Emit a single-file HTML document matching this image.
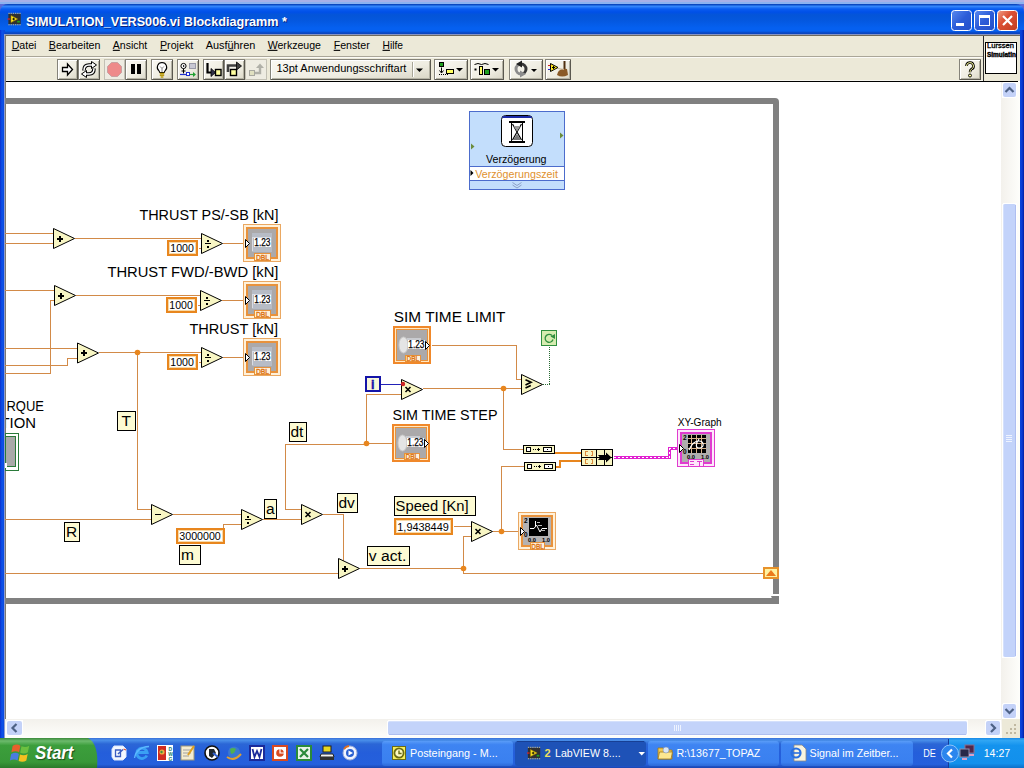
<!DOCTYPE html>
<html>
<head>
<meta charset="utf-8">
<title>SIMULATION_VERS006.vi Blockdiagramm</title>
<style>
html,body{margin:0;padding:0;}
body{width:1024px;height:768px;overflow:hidden;background:#fff;position:relative;font-family:"Liberation Sans",sans-serif;font-size:11px;color:#000;}
.abs{position:absolute;}
#deskTop{left:0;top:0;width:1024px;height:14px;background:linear-gradient(to bottom,#a8b0e8 0,#a8b0e8 2px,#8cb2f0 2px,#8cb2f0 4px,#5c6cd8 4px,#4a5cd4 14px);}
#title{left:0;top:4px;width:1024px;height:30px;border-radius:8px 8px 0 0;
 background:linear-gradient(to bottom,#0a48c0 0,#0a48c0 1px,#3a8cff 2px,#2a7cf8 3px,#0a5cf0 5px,#0050e8 8px,#0455d8 11px,#0457de 16px,#0560f0 24px,#0560f0 27px,#0a45c0 29px,#0a45c0 30px);}
#lb{left:0;top:30px;width:5px;height:708px;background:linear-gradient(to right,#0a2fcf 0,#0c52ea 2px,#0b45d8 5px);}
#lb2{left:4px;top:34px;width:1px;height:704px;background:#8c9cd0;}
#rb{left:1020px;top:30px;width:4px;height:708px;background:linear-gradient(to right,#0b45d8,#0a3cd6 50%,#021fa0);}
#menubar{left:5px;top:34px;width:1015px;height:23px;background:#ece9d8;border-top:1px solid #8694c4;box-sizing:border-box;box-shadow:inset 0 1px 0 #6e6a5c;}
#toolbar{left:5px;top:57px;width:1015px;height:24px;background:#ece9d8;border-top:1px solid #fbfaf6;box-sizing:border-box;}
#mline{left:5px;top:56px;width:978px;height:1px;background:#aaa698;}
#tbl2{left:5px;top:80px;width:978px;height:1px;background:#f6f5ee;}
#iconpane{left:983px;top:36px;width:37px;height:45px;background:#ece9d8;border-left:1px solid #303030;box-sizing:border-box;}
#tbline{left:5px;top:81px;width:1013px;height:1px;background:#000;}
#canvasL{left:5px;top:35px;width:1px;height:703px;background:#7c7870;}
svg{position:absolute;left:0;top:0;}
svg text{font-family:"Liberation Sans",sans-serif;white-space:pre;}
</style>
</head>
<body>
<div id="deskTop" class="abs"></div>
<div id="title" class="abs"></div>
<div id="lb" class="abs"></div>
<div id="rb" class="abs"></div>
<div id="lb2" class="abs"></div>
<div id="menubar" class="abs"></div>
<div id="toolbar" class="abs"></div>
<div id="mline" class="abs"></div>
<div id="iconpane" class="abs"></div>
<div id="tbl2" class="abs"></div>
<div id="tbline" class="abs"></div>
<div id="canvasL" class="abs"></div>
<svg width="1024" height="768" viewBox="0 0 1024 768" shape-rendering="crispEdges">
<g id="scroll">
<defs><linearGradient id="gvt" x1="0" y1="0" x2="1" y2="0"><stop offset="0" stop-color="#f3f1ec"/><stop offset="1" stop-color="#fefefb"/></linearGradient><linearGradient id="ght" x1="0" y1="0" x2="0" y2="1"><stop offset="0" stop-color="#f3f1ec"/><stop offset="1" stop-color="#fefefb"/></linearGradient></defs>
<rect x="1001" y="82" width="19" height="637" fill="url(#gvt)"/>
<rect x="5" y="719" width="997" height="19" fill="url(#ght)"/>
<rect x="1002" y="719" width="18" height="19" fill="#ece9d8"/>
<rect x="1002" y="82" width="15" height="16" fill="#fff" rx="2"/><rect x="1003" y="83" width="13" height="14" rx="2" fill="#c4d2f8" shape-rendering="auto"/><path d="M1005.5 92.0L1009.5 88.0L1013.5 92.0" stroke="#4d6185" stroke-width="2.2" fill="none" shape-rendering="auto"/>
<rect x="1002" y="703" width="15" height="16" fill="#fff" rx="2"/><rect x="1003" y="704" width="13" height="14" rx="2" fill="#c4d2f8" shape-rendering="auto"/><path d="M1005.5 709.0L1009.5 713.0L1013.5 709.0" stroke="#4d6185" stroke-width="2.2" fill="none" shape-rendering="auto"/>
<rect x="1002" y="203" width="15" height="455" fill="#fff" rx="2"/>
<rect x="1003" y="204" width="13" height="453" rx="2" fill="#c3d3fa" shape-rendering="auto"/>
<path d="M1003.5 205V656" stroke="#d4e0fc" stroke-width="1"/><path d="M1015.500 205V656" stroke="#aebef0" stroke-width="1"/>
<path d="M1006 435.500h6M1006 437.500h6M1006 439.500h6M1006 441.500h6" stroke="#eef3ff" stroke-width="1"/>
<rect x="6" y="720" width="17" height="16" fill="#fff" rx="2"/><rect x="7" y="721" width="15" height="14" rx="2" fill="#c4d2f8" shape-rendering="auto"/><path d="M16.5 724.0L12.5 728.0L16.5 732.0" stroke="#4d6185" stroke-width="2.2" fill="none" shape-rendering="auto"/>
<rect x="985" y="720" width="16" height="16" fill="#fff" rx="2"/><rect x="986" y="721" width="14" height="14" rx="2" fill="#c4d2f8" shape-rendering="auto"/><path d="M991.0 724.0L995.0 728.0L991.0 732.0" stroke="#4d6185" stroke-width="2.2" fill="none" shape-rendering="auto"/>
<rect x="387" y="720" width="581" height="16" fill="#fff" rx="2"/>
<rect x="388" y="721" width="579" height="14" rx="2" fill="#c3d3fa" shape-rendering="auto"/>
<path d="M389 721.500H966" stroke="#d4e0fc" stroke-width="1"/><path d="M389 734.500H966" stroke="#aebef0" stroke-width="1"/>
<path d="M674.500 725v6M676.500 725v6M678.500 725v6M680.500 725v6" stroke="#eef3ff" stroke-width="1"/>
<rect x="1014" y="724" width="2" height="2" fill="#c0b8a0"/><rect x="1010" y="728" width="2" height="2" fill="#c0b8a0"/><rect x="1014" y="728" width="2" height="2" fill="#c0b8a0"/><rect x="1006" y="732" width="2" height="2" fill="#c0b8a0"/><rect x="1010" y="732" width="2" height="2" fill="#c0b8a0"/><rect x="1014" y="732" width="2" height="2" fill="#c0b8a0"/>
</g>
<g id="diagram">
<path d="M5 98H775Q779 98 779 102V594H773V104H5Z" fill="#808080" shape-rendering="auto"/>
<rect x="5" y="598" width="768" height="6" fill="#808080"/>
<polygon points="771,596 779,596 779,604 771,604 773,601" fill="#808080" shape-rendering="auto"/>
<polyline points="4.5,233.5 53.5,233.5" fill="none" stroke="#d28a48" stroke-width="1"/>
<polyline points="4.5,243.5 53.5,243.5" fill="none" stroke="#d28a48" stroke-width="1"/>
<polyline points="74.5,238.5 201.5,238.5" fill="none" stroke="#d28a48" stroke-width="1"/>
<polyline points="198.5,248.5 201.5,248.5" fill="none" stroke="#d28a48" stroke-width="1"/>
<polyline points="222.5,243.5 243.5,243.5" fill="none" stroke="#d28a48" stroke-width="1"/>
<polyline points="4.5,290.5 54.5,290.5" fill="none" stroke="#d28a48" stroke-width="1"/>
<polyline points="54.5,300.5 50.5,300.5 50.5,373.5 4.5,373.5" fill="none" stroke="#d28a48" stroke-width="1"/>
<polyline points="75.5,295.5 200.5,295.5" fill="none" stroke="#d28a48" stroke-width="1"/>
<polyline points="197.5,305.5 200.5,305.5" fill="none" stroke="#d28a48" stroke-width="1"/>
<polyline points="221.5,300.5 243.5,300.5" fill="none" stroke="#d28a48" stroke-width="1"/>
<polyline points="4.5,348.5 77.5,348.5" fill="none" stroke="#d28a48" stroke-width="1"/>
<polyline points="77.5,358.5 67.5,358.5 67.5,365.5 4.5,365.5" fill="none" stroke="#d28a48" stroke-width="1"/>
<polyline points="98.5,352.5 201.5,352.5" fill="none" stroke="#d28a48" stroke-width="1"/>
<polyline points="198.5,362.5 201.5,362.5" fill="none" stroke="#d28a48" stroke-width="1"/>
<polyline points="222.5,357.5 243.5,357.5" fill="none" stroke="#d28a48" stroke-width="1"/>
<polyline points="137.5,352.5 137.5,509.5 151.5,509.5" fill="none" stroke="#d28a48" stroke-width="1"/>
<polyline points="4.5,519.5 151.5,519.5" fill="none" stroke="#d28a48" stroke-width="1"/>
<polyline points="172.5,514.5 241.5,514.5" fill="none" stroke="#d28a48" stroke-width="1"/>
<polyline points="241.5,524.5 223.5,524.5 223.5,528.5" fill="none" stroke="#d28a48" stroke-width="1"/>
<polyline points="262.5,519.5 301.5,519.5" fill="none" stroke="#d28a48" stroke-width="1"/>
<polyline points="392.5,443.5 366.5,443.5" fill="none" stroke="#d28a48" stroke-width="1"/>
<polyline points="366.5,444.5 285.5,444.5 285.5,509.5 301.5,509.5" fill="none" stroke="#d28a48" stroke-width="1"/>
<polyline points="322.5,514.5 343.5,514.5 343.5,562.5" fill="none" stroke="#d28a48" stroke-width="1"/>
<polyline points="4.5,573.5 338.5,573.5" fill="none" stroke="#d28a48" stroke-width="1"/>
<polyline points="359.5,568.5 463.5,568.5" fill="none" stroke="#d28a48" stroke-width="1"/>
<polyline points="471.5,536.5 463.5,536.5 463.5,573.5 763.5,573.5" fill="none" stroke="#d28a48" stroke-width="1"/>
<polyline points="453.5,526.5 471.5,526.5" fill="none" stroke="#d28a48" stroke-width="1"/>
<polyline points="492.5,531.5 518.5,531.5" fill="none" stroke="#d28a48" stroke-width="1"/>
<polyline points="501.5,531.5 501.5,466.5 524.5,466.5" fill="none" stroke="#d28a48" stroke-width="1"/>
<polyline points="366.5,443.5 366.5,394.5 401.5,394.5" fill="none" stroke="#d28a48" stroke-width="1"/>
<polyline points="422.5,388.5 521.5,388.5" fill="none" stroke="#d28a48" stroke-width="1"/>
<polyline points="503.5,388.5 503.5,449.5 523.5,449.5" fill="none" stroke="#d28a48" stroke-width="1"/>
<polyline points="431.5,345.5 516.5,345.5 516.5,379.5 521.5,379.5" fill="none" stroke="#d28a48" stroke-width="1"/>
<polyline points="380.5,384.5 401.5,384.5" fill="none" stroke="#2222b8" stroke-width="1"/>
<polyline points="542.5,384.5 549.5,384.5 549.5,346" fill="none" stroke="#2a6a34" stroke-width="1" stroke-dasharray="1 1"/>
<polyline points="555,453 581,453" fill="none" stroke="#e8861e" stroke-width="2"/>
<polyline points="556,467 560,467 560,461 581,461" fill="none" stroke="#e8861e" stroke-width="2"/>
<polyline points="613.5,457.5 669.5,457.5 669.5,448.5 677.5,448.5" fill="none" stroke="#e020d0" stroke-width="3"/><polyline points="613.5,457.5 669.5,457.5 669.5,448.5 677.5,448.5" fill="none" stroke="#fff" stroke-width="1" stroke-dasharray="2 2"/>
<circle cx="137.5" cy="352.5" r="2.8" fill="#e8861e" shape-rendering="auto"/>
<circle cx="366.5" cy="443.5" r="2.8" fill="#e8861e" shape-rendering="auto"/>
<circle cx="503.5" cy="388.5" r="2.8" fill="#e8861e" shape-rendering="auto"/>
<circle cx="501.5" cy="531.5" r="2.8" fill="#e8861e" shape-rendering="auto"/>
<circle cx="463.5" cy="568.5" r="2.8" fill="#e8861e" shape-rendering="auto"/>
<polygon points="53.5,228.5 74.5,238.5 53.5,248.5" fill="#f8f6c4" stroke="#000" stroke-width="1" shape-rendering="auto"/><path d="M57 238.5H63M60 235.5V241.5" stroke="#000" stroke-width="2" fill="none"/>
<polygon points="201.5,233.5 222.5,243.5 201.5,253.5" fill="#f8f6c4" stroke="#000" stroke-width="1" shape-rendering="auto"/><path d="M205 243.5H211" stroke="#000" stroke-width="1.2" fill="none"/><rect x="207" y="239.5" width="2" height="2" fill="#000"/><rect x="207" y="245.5" width="2" height="2" fill="#000"/>
<rect x="168" y="241" width="29" height="14" fill="#fff" stroke="#e8861e" stroke-width="2"/><rect x="169.5" y="242.5" width="26" height="11" fill="none" stroke="#f7d9a8" stroke-width="1"/><text x="170.3" y="252" font-size="11.5" fill="#000" textLength="23.5" lengthAdjust="spacingAndGlyphs">1000</text>
<rect x="243.5" y="224.5" width="37" height="37" fill="#fff1da" stroke="#eaa862" stroke-width="1"/><rect x="247" y="228" width="30" height="30" fill="#aba9aa" stroke="#e8923c" stroke-width="2"/><rect x="252" y="233" width="20" height="19" fill="#b7bcc6"/><path d="M252.5 251V237.5H271" stroke="#d8dce4" stroke-width="1" fill="none"/><rect x="254" y="238" width="17" height="9" fill="#fff"/><text x="254.3" y="246" font-size="10" fill="#000" textLength="16.2" lengthAdjust="spacingAndGlyphs" stroke="#000" stroke-width="0.25">1.23</text><polygon points="245.5,239.5 249.5,243.5 245.5,247.5" fill="#fff" stroke="#000" stroke-width="1" shape-rendering="auto"/><rect x="254.5" y="253.5" width="16" height="7" fill="#fff1da" stroke="#e8923c" stroke-width="1"/><text x="256" y="259.8" font-size="7" fill="#dc7414" textLength="13" lengthAdjust="spacingAndGlyphs" stroke="#dc7414" stroke-width="0.35">DBL</text>
<polygon points="54.5,285.5 75.5,295.5 54.5,305.5" fill="#f8f6c4" stroke="#000" stroke-width="1" shape-rendering="auto"/><path d="M58 295.5H64M61 292.5V298.5" stroke="#000" stroke-width="2" fill="none"/>
<polygon points="200.5,290.5 221.5,300.5 200.5,310.5" fill="#f8f6c4" stroke="#000" stroke-width="1" shape-rendering="auto"/><path d="M204 300.5H210" stroke="#000" stroke-width="1.2" fill="none"/><rect x="206" y="296.5" width="2" height="2" fill="#000"/><rect x="206" y="302.5" width="2" height="2" fill="#000"/>
<rect x="167" y="298" width="29" height="14" fill="#fff" stroke="#e8861e" stroke-width="2"/><rect x="168.5" y="299.5" width="26" height="11" fill="none" stroke="#f7d9a8" stroke-width="1"/><text x="169.3" y="309" font-size="11.5" fill="#000" textLength="23.5" lengthAdjust="spacingAndGlyphs">1000</text>
<rect x="243.5" y="281.5" width="37" height="37" fill="#fff1da" stroke="#eaa862" stroke-width="1"/><rect x="247" y="285" width="30" height="30" fill="#aba9aa" stroke="#e8923c" stroke-width="2"/><rect x="252" y="290" width="20" height="19" fill="#b7bcc6"/><path d="M252.5 308V294.5H271" stroke="#d8dce4" stroke-width="1" fill="none"/><rect x="254" y="295" width="17" height="9" fill="#fff"/><text x="254.3" y="303" font-size="10" fill="#000" textLength="16.2" lengthAdjust="spacingAndGlyphs" stroke="#000" stroke-width="0.25">1.23</text><polygon points="245.5,296.5 249.5,300.5 245.5,304.5" fill="#fff" stroke="#000" stroke-width="1" shape-rendering="auto"/><rect x="254.5" y="310.5" width="16" height="7" fill="#fff1da" stroke="#e8923c" stroke-width="1"/><text x="256" y="316.8" font-size="7" fill="#dc7414" textLength="13" lengthAdjust="spacingAndGlyphs" stroke="#dc7414" stroke-width="0.35">DBL</text>
<polygon points="77.5,343 98.5,353 77.5,363" fill="#f8f6c4" stroke="#000" stroke-width="1" shape-rendering="auto"/><path d="M81 353H87M84 350V356" stroke="#000" stroke-width="2" fill="none"/>
<polygon points="201.5,347.5 222.5,357.5 201.5,367.5" fill="#f8f6c4" stroke="#000" stroke-width="1" shape-rendering="auto"/><path d="M205 357.5H211" stroke="#000" stroke-width="1.2" fill="none"/><rect x="207" y="353.5" width="2" height="2" fill="#000"/><rect x="207" y="359.5" width="2" height="2" fill="#000"/>
<rect x="168" y="355" width="29" height="14" fill="#fff" stroke="#e8861e" stroke-width="2"/><rect x="169.5" y="356.5" width="26" height="11" fill="none" stroke="#f7d9a8" stroke-width="1"/><text x="170.3" y="366" font-size="11.5" fill="#000" textLength="23.5" lengthAdjust="spacingAndGlyphs">1000</text>
<rect x="243.5" y="338.5" width="37" height="37" fill="#fff1da" stroke="#eaa862" stroke-width="1"/><rect x="247" y="342" width="30" height="30" fill="#aba9aa" stroke="#e8923c" stroke-width="2"/><rect x="252" y="347" width="20" height="19" fill="#b7bcc6"/><path d="M252.5 365V351.5H271" stroke="#d8dce4" stroke-width="1" fill="none"/><rect x="254" y="352" width="17" height="9" fill="#fff"/><text x="254.3" y="360" font-size="10" fill="#000" textLength="16.2" lengthAdjust="spacingAndGlyphs" stroke="#000" stroke-width="0.25">1.23</text><polygon points="245.5,353.5 249.5,357.5 245.5,361.5" fill="#fff" stroke="#000" stroke-width="1" shape-rendering="auto"/><rect x="254.5" y="367.5" width="16" height="7" fill="#fff1da" stroke="#e8923c" stroke-width="1"/><text x="256" y="373.8" font-size="7" fill="#dc7414" textLength="13" lengthAdjust="spacingAndGlyphs" stroke="#dc7414" stroke-width="0.35">DBL</text>
<polygon points="151.5,504.5 172.5,514.5 151.5,524.5" fill="#f8f6c4" stroke="#000" stroke-width="1" shape-rendering="auto"/><path d="M155 514.5H161" stroke="#000" stroke-width="1.2" fill="none"/>
<polygon points="241.5,509.5 262.5,519.5 241.5,529.5" fill="#f8f6c4" stroke="#000" stroke-width="1" shape-rendering="auto"/><path d="M245 519.5H251" stroke="#000" stroke-width="1.2" fill="none"/><rect x="247" y="515.5" width="2" height="2" fill="#000"/><rect x="247" y="521.5" width="2" height="2" fill="#000"/>
<rect x="177" y="529" width="47" height="14" fill="#fff" stroke="#e8861e" stroke-width="2"/><rect x="178.5" y="530.5" width="44" height="11" fill="none" stroke="#f7d9a8" stroke-width="1"/><text x="179.3" y="540" font-size="11.5" fill="#000" textLength="41.5" lengthAdjust="spacingAndGlyphs">3000000</text>
<polygon points="301.5,504.5 322.5,514.5 301.5,524.5" fill="#f8f6c4" stroke="#000" stroke-width="1" shape-rendering="auto"/><path d="M305.5 512L310.5 517M310.5 512L305.5 517" stroke="#000" stroke-width="1.6" fill="none" shape-rendering="auto"/>
<polygon points="338.5,558.5 359.5,568.5 338.5,578.5" fill="#f8f6c4" stroke="#000" stroke-width="1" shape-rendering="auto"/><path d="M342 568.5H348M345 565.5V571.5" stroke="#000" stroke-width="2" fill="none"/>
<polygon points="471.5,521.5 492.5,531.5 471.5,541.5" fill="#f8f6c4" stroke="#000" stroke-width="1" shape-rendering="auto"/><path d="M475.5 529L480.5 534M480.5 529L475.5 534" stroke="#000" stroke-width="1.6" fill="none" shape-rendering="auto"/>
<rect x="395" y="519" width="57" height="15" fill="#fff" stroke="#e8861e" stroke-width="2"/><rect x="396.5" y="520.5" width="54" height="12" fill="none" stroke="#f7d9a8" stroke-width="1"/><text x="397.3" y="531" font-size="11.5" fill="#000" textLength="51.5" lengthAdjust="spacingAndGlyphs">1,9438449</text>
<polygon points="401.5,379.5 422.5,389.5 401.5,399.5" fill="#f8f6c4" stroke="#000" stroke-width="1" shape-rendering="auto"/><path d="M405.5 387L410.5 392M410.5 387L405.5 392" stroke="#000" stroke-width="1.6" fill="none" shape-rendering="auto"/>
<polygon points="521.5,374.5 542.5,384.5 521.5,394.5" fill="#f8f6c4" stroke="#000" stroke-width="1" shape-rendering="auto"/><path d="M525.5 379.8L531 382.3L525.5 385M530.8 385.5L525.5 388" stroke="#000" stroke-width="1.7" fill="none" shape-rendering="auto"/>
<circle cx="403" cy="384" r="2.2" fill="#cc2424" shape-rendering="auto"/>
<rect x="394" y="327" width="36" height="36" fill="#ffe9c4" stroke="#f0882a" stroke-width="2"/><rect x="396.5" y="329.5" width="31" height="31" fill="#aba9aa" stroke="#e8923c" stroke-width="1"/><ellipse cx="403.5" cy="345" rx="4.5" ry="8" fill="#e4e4e4" stroke="#c9c9c9" stroke-width="1" shape-rendering="auto"/><rect x="407" y="338" width="14" height="2" fill="#c9cbd0"/><rect x="408" y="340" width="17" height="9" fill="#fff"/><text x="408.3" y="348" font-size="10" fill="#000" textLength="16.2" lengthAdjust="spacingAndGlyphs" stroke="#000" stroke-width="0.25">1.23</text><polygon points="425.5,341.5 429.5,345.5 425.5,349.5" fill="#fff" stroke="#000" stroke-width="1" shape-rendering="auto"/><rect x="405.5" y="355.5" width="15" height="6" fill="#fff1da" stroke="#e8923c" stroke-width="1"/><text x="406.5" y="361.3" font-size="7" fill="#dc7414" textLength="12.5" lengthAdjust="spacingAndGlyphs" stroke="#dc7414" stroke-width="0.35">DBL</text>
<rect x="393" y="425" width="36" height="36" fill="#ffe9c4" stroke="#f0882a" stroke-width="2"/><rect x="395.5" y="427.5" width="31" height="31" fill="#aba9aa" stroke="#e8923c" stroke-width="1"/><ellipse cx="402.5" cy="443" rx="4.5" ry="8" fill="#e4e4e4" stroke="#c9c9c9" stroke-width="1" shape-rendering="auto"/><rect x="406" y="436" width="14" height="2" fill="#c9cbd0"/><rect x="407" y="438" width="17" height="9" fill="#fff"/><text x="407.3" y="446" font-size="10" fill="#000" textLength="16.2" lengthAdjust="spacingAndGlyphs" stroke="#000" stroke-width="0.25">1.23</text><polygon points="424.5,439.5 428.5,443.5 424.5,447.5" fill="#fff" stroke="#000" stroke-width="1" shape-rendering="auto"/><rect x="404.5" y="453.5" width="15" height="6" fill="#fff1da" stroke="#e8923c" stroke-width="1"/><text x="405.5" y="459.3" font-size="7" fill="#dc7414" textLength="12.5" lengthAdjust="spacingAndGlyphs" stroke="#dc7414" stroke-width="0.35">DBL</text>
<rect x="518.5" y="512.5" width="37" height="37" fill="#fff1da" stroke="#eaa862" stroke-width="1"/><rect x="522" y="516" width="30" height="30" fill="#b4b2b2" stroke="#e8923c" stroke-width="2"/><rect x="529" y="518" width="19" height="18" fill="#000"/><path d="M530 528.5H534L536.5 525L540 532L542 528.5H547M535.5 521V526" stroke="#fff" stroke-width="1" fill="none" shape-rendering="auto"/><path d="M537 522.5H540M538 525.5H542M541 530.5H545" stroke="#bbb" stroke-width="1" fill="none"/><text x="524" y="523" font-size="6.5" fill="#000" font-weight="bold">2</text><text x="524" y="537" font-size="6.5" fill="#000" font-weight="bold">0</text><text x="528" y="542" font-size="6" fill="#000" font-weight="bold" textLength="8" lengthAdjust="spacingAndGlyphs">0.0</text><text x="542" y="542" font-size="6" fill="#000" font-weight="bold" textLength="8" lengthAdjust="spacingAndGlyphs">1.0</text><polygon points="520.5,527.5 524.5,531.5 520.5,535.5" fill="#fff" stroke="#000" stroke-width="1" shape-rendering="auto"/><rect x="530.5" y="542.5" width="14" height="7" fill="#fff1da" stroke="#e8923c" stroke-width="1"/><text x="531.3" y="548.8" font-size="7" fill="#dc7414" textLength="12.5" lengthAdjust="spacingAndGlyphs" stroke="#dc7414" stroke-width="0.35">DBL</text>
<rect x="677.5" y="429.5" width="37" height="37" fill="#fde8fa" stroke="#e03ccf" stroke-width="1"/><rect x="681" y="433" width="30" height="30" fill="#b0aeae" stroke="#e03ccf" stroke-width="2"/><rect x="688" y="435" width="18" height="18" fill="#000"/><path d="M691.5 435V453M688 438.5H706M696.5 435V453M688 443.5H706M701.5 435V453M688 448.5H706" stroke="#d8b48c" stroke-width="1" fill="none"/><path d="M689 450C692 443 695 441 699 441C704 441 705 448 699 448C695 448 696 443 699 439" stroke="#fff" stroke-width="1.2" fill="none" shape-rendering="auto"/><text x="683" y="440" font-size="6.5" fill="#000" font-weight="bold">2</text><text x="683" y="454" font-size="6.5" fill="#000" font-weight="bold">0</text><text x="687" y="459" font-size="6" fill="#000" font-weight="bold" textLength="8" lengthAdjust="spacingAndGlyphs">0.0</text><text x="701" y="459" font-size="6" fill="#000" font-weight="bold" textLength="8" lengthAdjust="spacingAndGlyphs">1.0</text><polygon points="679.5,444.5 683.5,448.5 679.5,452.5" fill="#fff" stroke="#000" stroke-width="1" shape-rendering="auto"/><rect x="688.5" y="459.5" width="15" height="7" fill="#fde8fa" stroke="#e03ccf" stroke-width="1"/><path d="M690 461.5H694M690 464.5H694M697 461.5H702M699.5 461V466" stroke="#e03ccf" stroke-width="1.6" fill="none"/>
<rect x="523.5" y="445.5" width="31" height="8" fill="#f8f6c4" stroke="#000" stroke-width="1"/><rect x="526.5" y="447.5" width="4" height="4" fill="#fff" stroke="#000" stroke-width="1"/><rect x="533" y="449" width="1" height="1" fill="#000"/><rect x="535" y="449" width="1" height="1" fill="#000"/><path d="M537 449.5H540M538.5 448V451" stroke="#000" stroke-width="1" fill="none"/><rect x="543.5" y="447.5" width="8" height="4" fill="#fff" stroke="#000" stroke-width="1"/><rect x="547" y="449" width="1" height="1" fill="#000"/>
<rect x="524.5" y="462.5" width="31" height="8" fill="#f8f6c4" stroke="#000" stroke-width="1"/><rect x="527.5" y="464.5" width="4" height="4" fill="#fff" stroke="#000" stroke-width="1"/><rect x="534" y="466" width="1" height="1" fill="#000"/><rect x="536" y="466" width="1" height="1" fill="#000"/><path d="M538 466.5H541M539.5 465V468" stroke="#000" stroke-width="1" fill="none"/><rect x="544.5" y="464.5" width="8" height="4" fill="#fff" stroke="#000" stroke-width="1"/><rect x="548" y="466" width="1" height="1" fill="#000"/>
<rect x="581.5" y="449.5" width="31" height="16" fill="#f8f6c4" stroke="#000" stroke-width="1"/><path d="M596.5 449V466M604.5 449V466M581 457.5H613" stroke="#000" stroke-width="1" fill="none"/><path d="M587.5 451.5H585.5V455.5H587.5M590.5 451.5H592.5V455.5H590.5" stroke="#dc8a3c" stroke-width="1" fill="none"/><path d="M587.5 459.5H585.5V463.5H587.5M590.5 459.5H592.5V463.5H590.5" stroke="#dc8a3c" stroke-width="1" fill="none"/><path d="M598 455H606V452.5L611.5 457.5L606 462.5V460H598L600 457.5Z" fill="#000" shape-rendering="auto"/>
<rect x="366" y="377" width="14" height="14" fill="#f7f7da" stroke="#1414a8" stroke-width="2"/>
<text x="371" y="388.6" font-size="12.5" fill="#1414a8" font-weight="bold" stroke="#1414a8" stroke-width="0.4">i</text>
<rect x="541.5" y="330.5" width="15" height="15" fill="#d6ecb0" stroke="#2f8f3f" stroke-width="1"/>
<path d="M552 335.5A4 4 0 1 0 553 339.5" stroke="#2f8f3f" stroke-width="1.3" fill="none" shape-rendering="auto"/><polygon points="550.5,336.5 555,334 555,339" fill="#2f8f3f" shape-rendering="auto"/>
<rect x="764" y="568" width="14" height="10" fill="#fff2a0" stroke="#e8922a" stroke-width="2"/>
<polygon points="766,576 771,570 776,576" fill="#ec7a1a" shape-rendering="auto"/>
<rect x="5.5" y="433.5" width="13" height="37" fill="#fff" stroke="#2a7a3a" stroke-width="1"/>
<rect x="5.5" y="436.5" width="10" height="30" fill="#a9a9a9" stroke="#2a7a3a" stroke-width="1"/>
<rect x="5" y="463" width="2" height="5" fill="#fff"/>
<text x="139.4" y="220.3" font-size="15.5" fill="#000" textLength="139" lengthAdjust="spacingAndGlyphs">THRUST PS/-SB [kN]</text>
<text x="107.4" y="277.3" font-size="15.5" fill="#000" textLength="171" lengthAdjust="spacingAndGlyphs">THRUST FWD/-BWD [kN]</text>
<text x="189.4" y="334" font-size="15.5" fill="#000" textLength="88.6" lengthAdjust="spacingAndGlyphs">THRUST [kN]</text>
<text x="393.8" y="321.6" font-size="15.5" fill="#000" textLength="111.7" lengthAdjust="spacingAndGlyphs">SIM TIME LIMIT</text>
<text x="392.5" y="419.8" font-size="15.5" fill="#000" textLength="105" lengthAdjust="spacingAndGlyphs">SIM TIME STEP</text>
<text x="6.5" y="410.5" font-size="15.5" fill="#000" textLength="37.5" lengthAdjust="spacingAndGlyphs">RQUE</text>
<clipPath id="cv"><rect x="6" y="82" width="996" height="637"/></clipPath>
<text x="0.5" y="428.3" font-size="15.5" fill="#000" textLength="35.5" lengthAdjust="spacingAndGlyphs" clip-path="url(#cv)">TION</text>
<text x="677.7" y="426" font-size="11" fill="#000" textLength="44" lengthAdjust="spacingAndGlyphs">XY-Graph</text>
<rect x="117.5" y="411.5" width="18" height="19" fill="#fdfbd3" stroke="#000" stroke-width="1"/><text x="121.5" y="426" font-size="15.5" fill="#000">T</text>
<rect x="64.5" y="522.5" width="15" height="19" fill="#fdfbd3" stroke="#000" stroke-width="1"/><text x="66" y="537" font-size="15.5" fill="#000">R</text>
<rect x="179.5" y="545.5" width="21" height="19" fill="#fdfbd3" stroke="#000" stroke-width="1"/><text x="181" y="560" font-size="15.5" fill="#000">m</text>
<rect x="264.5" y="499.5" width="12" height="19" fill="#fdfbd3" stroke="#000" stroke-width="1"/><text x="266" y="514" font-size="15.5" fill="#000">a</text>
<rect x="289.5" y="422.5" width="17" height="19" fill="#fdfbd3" stroke="#000" stroke-width="1"/><text x="290.5" y="437" font-size="15.5" fill="#000">dt</text>
<rect x="337.5" y="493.5" width="20" height="19" fill="#fdfbd3" stroke="#000" stroke-width="1"/><text x="338.5" y="508" font-size="15.5" fill="#000">dv</text>
<rect x="367.5" y="546.5" width="42" height="19" fill="#fdfbd3" stroke="#000" stroke-width="1"/><text x="368.8" y="561" font-size="15.5" fill="#000" textLength="37.5" lengthAdjust="spacingAndGlyphs">v act.</text>
<rect x="394.5" y="496.5" width="81" height="19" fill="#fdfbd3" stroke="#000" stroke-width="1"/><text x="395.6" y="511" font-size="15.5" fill="#000" textLength="73" lengthAdjust="spacingAndGlyphs">Speed [Kn]</text>
<rect x="469.5" y="111.5" width="95" height="78" fill="#c3defc" stroke="#4c6ccc" stroke-width="1"/>
<rect x="470" y="167" width="94" height="13" fill="#fff"/>
<path d="M469 166.5H565M469 180.5H565" stroke="#4c6ccc" stroke-width="1" fill="none"/>
<rect x="501.5" y="115.5" width="31" height="31" rx="4" fill="#fff" stroke="#000" stroke-width="1" shape-rendering="auto"/>
<path d="M503.5 116H530.5Q532 116.5 532 118H502Q502 116.5 503.5 116Z" fill="#1a2aa8" shape-rendering="auto"/>
<path d="M509 121H525V123H509ZM509 141H525V143H509Z" fill="#000"/>
<path d="M511.5 123V141M522.5 123V141" stroke="#000" stroke-width="1.6" fill="none"/>
<path d="M512.5 124L521.5 140M521.5 124L512.5 140" stroke="#000" stroke-width="1.2" fill="none" shape-rendering="auto"/>
<polygon points="513.5,126 520.5,126 517,131.5" fill="#999" shape-rendering="auto"/><polygon points="513,140 521,140 517,134" fill="#777" shape-rendering="auto"/>
<polygon points="471,143.5 474.5,146.5 471,149.5" fill="#6c8c3c" shape-rendering="auto"/>
<polygon points="560,132.5 563.5,135.5 560,138.5" fill="#6c8c3c" shape-rendering="auto"/>
<text x="486" y="162.5" font-size="11" fill="#000" textLength="60.5" lengthAdjust="spacingAndGlyphs">Verzögerung</text>
<polygon points="470.5,170 473.5,173 470.5,176" fill="#000" shape-rendering="auto"/>
<text x="475.2" y="177.6" font-size="11" fill="#e0912e" textLength="82.7" lengthAdjust="spacingAndGlyphs">Verzögerungszeit</text>
<path d="M512.5 182.5L517 185.5L521.5 182.5M512.5 185L517 188L521.5 185" stroke="#8ca0c8" stroke-width="1" fill="none" shape-rendering="auto"/>
</g>
<g id="tb">
<defs><linearGradient id="gbtn" x1="0" y1="0" x2="1" y2="1"><stop offset="0" stop-color="#fbfaf5"/><stop offset="0.6" stop-color="#efede2"/><stop offset="1" stop-color="#d8d5c4"/></linearGradient></defs>
<rect x="57" y="59" width="21" height="21" fill="url(#gbtn)"/><path d="M57.5 79.5V59.5H77.5" stroke="#85837a" stroke-width="1" fill="none"/><path d="M58.5 78.5V60.5H76.5" stroke="#ffffff" stroke-width="1" fill="none"/><path d="M77.5 59.5V79.5H57.5" stroke="#5a584f" stroke-width="1" fill="none"/><path d="M76.5 61V78.5H59" stroke="#b4b2a4" stroke-width="1" fill="none"/>
<path d="M62.5 67.5H67.5V64L72.5 69.5L67.5 75V71.5H62.5Z" fill="#fff" stroke="#000" stroke-width="1.3" shape-rendering="auto"/>
<rect x="78" y="59" width="22" height="21" fill="url(#gbtn)"/><path d="M78.5 79.5V59.5H99.5" stroke="#85837a" stroke-width="1" fill="none"/><path d="M79.5 78.5V60.5H98.5" stroke="#ffffff" stroke-width="1" fill="none"/><path d="M99.5 59.5V79.5H78.5" stroke="#5a584f" stroke-width="1" fill="none"/><path d="M98.5 61V78.5H80" stroke="#b4b2a4" stroke-width="1" fill="none"/>
<g shape-rendering="auto" fill="none"><path d="M84 70.5Q84 65 89 65H92" stroke="#000" stroke-width="3.6"/><path d="M94 68.500Q94 74 89 74H86" stroke="#000" stroke-width="3.6"/><polygon points="91.5,61.500 96.5,65 91.5,68.500" fill="#fff" stroke="#000" stroke-width="1"/><polygon points="86.5,70.500 81.5,74 86.5,77.500" fill="#fff" stroke="#000" stroke-width="1"/><path d="M84 70.500Q84 65 89 65H92.500" stroke="#fff" stroke-width="1.500"/><path d="M94 68.500Q94 74 89 74H85.500" stroke="#fff" stroke-width="1.500"/></g>
<rect x="104.5" y="59.5" width="20" height="20" fill="#eeece2" stroke="#c2c0b4" stroke-width="1"/>
<polygon points="111.5,62.5 117.5,62.5 121.5,66.5 121.5,72.5 117.5,76.5 111.5,76.5 107.5,72.5 107.5,66.5" fill="#ee8a8a" stroke="#c9a0a0" stroke-width="1" shape-rendering="auto"/>
<rect x="125" y="59" width="22" height="21" fill="url(#gbtn)"/><path d="M125.5 79.5V59.5H146.5" stroke="#85837a" stroke-width="1" fill="none"/><path d="M126.5 78.5V60.5H145.5" stroke="#ffffff" stroke-width="1" fill="none"/><path d="M146.5 59.5V79.5H125.5" stroke="#5a584f" stroke-width="1" fill="none"/><path d="M145.5 61V78.5H127" stroke="#b4b2a4" stroke-width="1" fill="none"/>
<rect x="131" y="64" width="4" height="10" fill="#000"/><rect x="137" y="64" width="4" height="10" fill="#000"/>
<rect x="151" y="59" width="22" height="21" fill="url(#gbtn)"/><path d="M151.5 79.5V59.5H172.5" stroke="#85837a" stroke-width="1" fill="none"/><path d="M152.5 78.5V60.5H171.5" stroke="#ffffff" stroke-width="1" fill="none"/><path d="M172.5 59.5V79.5H151.5" stroke="#5a584f" stroke-width="1" fill="none"/><path d="M171.5 61V78.5H153" stroke="#b4b2a4" stroke-width="1" fill="none"/>
<g shape-rendering="auto"><path d="M162 62.5a4.7 4.7 0 0 1 3 8.3l-.8 1.7h-4.4l-.8-1.7a4.7 4.7 0 0 1 3-8.3z" fill="#fff" stroke="#000" stroke-width="1.1"/><path d="M160.2 66.5l1.8 2l1.8-2M162 68.5v3.5" stroke="#666" stroke-width=".8" fill="none"/><path d="M159.8 73.5h4.4M159.8 75.3h4.4M160.6 77h2.8" stroke="#b89a10" stroke-width="1.4" fill="none"/></g>
<rect x="177" y="59" width="22" height="21" fill="url(#gbtn)"/><path d="M177.5 79.5V59.5H198.5" stroke="#85837a" stroke-width="1" fill="none"/><path d="M178.5 78.5V60.5H197.5" stroke="#ffffff" stroke-width="1" fill="none"/><path d="M198.5 59.5V79.5H177.5" stroke="#5a584f" stroke-width="1" fill="none"/><path d="M197.5 61V78.5H179" stroke="#b4b2a4" stroke-width="1" fill="none"/>
<g shape-rendering="auto"><circle cx="183.5" cy="66" r="2.6" fill="#fff" stroke="#000" stroke-width="1"/><path d="M183 64.8v2.4l1.7-1.2z" fill="#000"/><path d="M183.5 68.6v4.8M181.5 71h4" stroke="#000" stroke-width="1" fill="none"/><rect x="189.5" y="63.5" width="6" height="5" fill="#c8c8d4" stroke="#9a9aa8"/><path d="M180 74.5h7" stroke="#2030d0" stroke-width="1.2"/><rect x="186.5" y="72.5" width="3" height="3" fill="#fff" stroke="#2030d0" stroke-width="1"/><path d="M190 74.5h4" stroke="#20a030" stroke-width="1.2"/><path d="M193 72l3 2.5l-3 2.500z" fill="#20a030"/></g>
<rect x="203" y="59" width="21" height="21" fill="url(#gbtn)"/><path d="M203.5 79.5V59.5H223.5" stroke="#85837a" stroke-width="1" fill="none"/><path d="M204.5 78.5V60.5H222.5" stroke="#ffffff" stroke-width="1" fill="none"/><path d="M223.5 59.5V79.5H203.5" stroke="#5a584f" stroke-width="1" fill="none"/><path d="M222.5 61V78.5H205" stroke="#b4b2a4" stroke-width="1" fill="none"/>
<g shape-rendering="auto"><path d="M207.500 63v9.500h5" stroke="#000" stroke-width="2.2" fill="none"/><path d="M211 68.500l4.500 4l-4.500 4z" fill="#303048" stroke="#000" stroke-width=".8"/><rect x="215.500" y="69.500" width="5.500" height="6" fill="#ffffa0" stroke="#000" stroke-width="1.400"/></g>
<rect x="224" y="59" width="21" height="21" fill="url(#gbtn)"/><path d="M224.5 79.5V59.5H244.5" stroke="#85837a" stroke-width="1" fill="none"/><path d="M225.5 78.5V60.5H243.5" stroke="#ffffff" stroke-width="1" fill="none"/><path d="M244.5 59.5V79.5H224.5" stroke="#5a584f" stroke-width="1" fill="none"/><path d="M243.5 61V78.5H226" stroke="#b4b2a4" stroke-width="1" fill="none"/>
<g shape-rendering="auto"><path d="M228 72v-6.500h9" stroke="#404040" stroke-width="2.600" fill="none"/><path d="M236.500 62l5 4l-5 4z" fill="#404040" stroke="#000" stroke-width=".8"/><rect x="230.500" y="69.500" width="6" height="6" fill="#ffffa0" stroke="#000" stroke-width="1.400"/></g>
<rect x="245.5" y="59.5" width="21" height="20" fill="#eeece2" stroke="#c2c0b4" stroke-width="1"/>
<g shape-rendering="auto"><rect x="249.500" y="70.500" width="5" height="5" fill="#e0e0c0" stroke="#a8a8a0" stroke-width="1"/><path d="M255 73h5v-6" stroke="#b0b0a8" stroke-width="2.400" fill="none"/><path d="M256 68l4-4.500l4 4.500z" fill="#b0b0a8"/></g>
<rect x="270" y="59" width="161" height="21" fill="url(#gbtn)"/><path d="M270.5 79.5V59.5H430.5" stroke="#85837a" stroke-width="1" fill="none"/><path d="M271.5 78.5V60.5H429.5" stroke="#ffffff" stroke-width="1" fill="none"/><path d="M430.5 59.5V79.5H270.5" stroke="#5a584f" stroke-width="1" fill="none"/><path d="M429.5 61V78.5H272" stroke="#b4b2a4" stroke-width="1" fill="none"/>
<path d="M412.500 62V77" stroke="#a8a698" stroke-width="1"/><path d="M413.500 62V77" stroke="#fff" stroke-width="1"/>
<polygon points="416,68.500 423,68.500 419.500,72" fill="#000" shape-rendering="auto"/>
<text x="276.4" y="71.7" font-size="11" fill="#000" textLength="130" lengthAdjust="spacingAndGlyphs">13pt Anwendungsschriftart</text>
<rect x="434" y="59" width="34" height="21" fill="url(#gbtn)"/><path d="M434.5 79.5V59.5H467.5" stroke="#85837a" stroke-width="1" fill="none"/><path d="M435.5 78.5V60.5H466.5" stroke="#ffffff" stroke-width="1" fill="none"/><path d="M467.5 59.5V79.5H434.5" stroke="#5a584f" stroke-width="1" fill="none"/><path d="M466.5 61V78.5H436" stroke="#b4b2a4" stroke-width="1" fill="none"/>
<g shape-rendering="auto"><rect x="439.500" y="62.500" width="4" height="4" fill="#20a020" stroke="#000" stroke-width="1"/><path d="M441.500 67.500v5M439.500 70.500l2 2.500l2-2.500" stroke="#000" stroke-width="1" fill="none"/><path d="M439 74.500h10" stroke="#000" stroke-width="1" stroke-dasharray="1 1"/><rect x="446.500" y="69.500" width="7" height="4" fill="#ffff60" stroke="#000" stroke-width="1"/><polygon points="456,68 463,68 459.500,71.500" fill="#000"/></g>
<rect x="470" y="59" width="34" height="21" fill="url(#gbtn)"/><path d="M470.5 79.5V59.5H503.5" stroke="#85837a" stroke-width="1" fill="none"/><path d="M471.5 78.5V60.5H502.5" stroke="#ffffff" stroke-width="1" fill="none"/><path d="M503.5 59.5V79.5H470.5" stroke="#5a584f" stroke-width="1" fill="none"/><path d="M502.5 61V78.5H472" stroke="#b4b2a4" stroke-width="1" fill="none"/>
<g shape-rendering="auto"><path d="M474.500 64.500q3.500-2 7 0q3.500-2 7 0" stroke="#000" stroke-width="1" fill="none"/><rect x="474.500" y="68.500" width="2" height="2" fill="#000"/><rect x="479.500" y="66.500" width="3" height="8" fill="#ffff60" stroke="#000" stroke-width="1"/><rect x="484.500" y="69.500" width="5" height="5" fill="#20a020" stroke="#000" stroke-width="1"/><polygon points="492,68 499,68 495.500,71.500" fill="#000"/></g>
<rect x="509" y="59" width="34" height="21" fill="url(#gbtn)"/><path d="M509.5 79.5V59.5H542.5" stroke="#85837a" stroke-width="1" fill="none"/><path d="M510.5 78.5V60.5H541.5" stroke="#ffffff" stroke-width="1" fill="none"/><path d="M542.5 59.5V79.5H509.5" stroke="#5a584f" stroke-width="1" fill="none"/><path d="M541.5 61V78.5H511" stroke="#b4b2a4" stroke-width="1" fill="none"/>
<g shape-rendering="auto" fill="none"><path d="M521 64A5 5 0 0 0 521 74" stroke="#8c8c8c" stroke-width="3"/><path d="M521 64A5 5 0 0 1 521 74" stroke="#383838" stroke-width="3"/><polygon points="522,60.500 516,64 522,67.500" fill="#202020"/><polygon points="520,70.500 526,74 520,77.500" fill="#8c8c8c"/><polygon points="531,69 537,69 534,72" fill="#000"/></g>
<rect x="545" y="59" width="26" height="21" fill="url(#gbtn)"/><path d="M545.5 79.5V59.5H570.5" stroke="#85837a" stroke-width="1" fill="none"/><path d="M546.5 78.5V60.5H569.5" stroke="#ffffff" stroke-width="1" fill="none"/><path d="M570.5 59.5V79.5H545.5" stroke="#5a584f" stroke-width="1" fill="none"/><path d="M569.5 61V78.5H547" stroke="#b4b2a4" stroke-width="1" fill="none"/>
<g shape-rendering="auto"><polygon points="550.500,63.500 550.500,71.500 558,67.500" fill="#ffe820" stroke="#000" stroke-width="1"/><path d="M548 65.500h2.500" stroke="#d02020" stroke-width="1"/><path d="M548 69.500h2.500" stroke="#2020d0" stroke-width="1"/><path d="M552 67.500h3M553.500 66v3" stroke="#000" stroke-width="1"/><path d="M564.500 61v8" stroke="#503010" stroke-width="2"/><path d="M558 72q3-4 9-3l1 6q-6 3-11 0z" fill="#8a5a28"/><path d="M558 68.500l6 1" stroke="#c8b090" stroke-width="1"/></g>
<rect x="959" y="59" width="22" height="21" fill="url(#gbtn)"/><path d="M959.5 79.5V59.5H980.5" stroke="#85837a" stroke-width="1" fill="none"/><path d="M960.5 78.5V60.5H979.5" stroke="#ffffff" stroke-width="1" fill="none"/><path d="M980.5 59.5V79.5H959.5" stroke="#5a584f" stroke-width="1" fill="none"/><path d="M979.5 61V78.5H961" stroke="#b4b2a4" stroke-width="1" fill="none"/>
<path d="M966.500 66a3.500 3.500 0 1 1 5 3.200q-1.500 1-1.500 3" stroke="#000" stroke-width="2.600" fill="none" shape-rendering="auto"/><path d="M966.500 66a3.500 3.500 0 1 1 5 3.200q-1.500 1-1.500 3" stroke="#ffffa0" stroke-width="1" fill="none" shape-rendering="auto"/><circle cx="970" cy="75.500" r="1.500" fill="#ffffa0" stroke="#000" stroke-width=".9" shape-rendering="auto"/>
<rect x="985.5" y="42.5" width="31" height="31" fill="#fff" stroke="#000" stroke-width="1"/>
<text x="987" y="48" font-size="7" fill="#000" textLength="27" lengthAdjust="spacingAndGlyphs" stroke="#000" stroke-width="0.3">Lurssen</text>
<text x="987" y="57" font-size="6.5" fill="#000" font-weight="bold" textLength="29" lengthAdjust="spacingAndGlyphs" stroke="#000" stroke-width="0.4">Simulatin</text>
</g>
<g id="menu">
<text x="11.7" y="48.8" font-size="11" textLength="24.8" lengthAdjust="spacingAndGlyphs"><tspan text-decoration="underline">D</tspan>atei</text>
<text x="48.8" y="48.8" font-size="11" textLength="51.7" lengthAdjust="spacingAndGlyphs"><tspan text-decoration="underline">B</tspan>earbeiten</text>
<text x="112.8" y="48.8" font-size="11" textLength="34.5" lengthAdjust="spacingAndGlyphs"><tspan text-decoration="underline">A</tspan>nsicht</text>
<text x="160" y="48.8" font-size="11" textLength="33.2" lengthAdjust="spacingAndGlyphs"><tspan text-decoration="underline">P</tspan>rojekt</text>
<text x="205.7" y="48.8" font-size="11" textLength="49.7" lengthAdjust="spacingAndGlyphs">Ausf<tspan text-decoration="underline">ü</tspan>hren</text>
<text x="267.7" y="48.8" font-size="11" textLength="53.3" lengthAdjust="spacingAndGlyphs"><tspan text-decoration="underline">W</tspan>erkzeuge</text>
<text x="333.7" y="48.8" font-size="11" textLength="36.1" lengthAdjust="spacingAndGlyphs"><tspan text-decoration="underline">F</tspan>enster</text>
<text x="382.5" y="48.8" font-size="11" textLength="20.5" lengthAdjust="spacingAndGlyphs"><tspan text-decoration="underline">H</tspan>ilfe</text>
</g>
<g id="titleg">
<g transform="translate(7.5,12) scale(0.88)" shape-rendering="auto"><rect x="1" y="2" width="14" height="12" fill="#303030"/><path d="M1 1.500h14M1 14.500h14" stroke="#d8c890" stroke-width="1" stroke-dasharray="1.500 1"/><polygon points="4,4 4,12 11.500,8" fill="#ffe61e" stroke="#a08000" stroke-width=".6"/><path d="M0 8h3" stroke="#e02020" stroke-width="1.400"/><path d="M5.500 8h3M7 6.500v3" stroke="#000" stroke-width="1"/><path d="M11 10h3v2h-3z" fill="#20a020"/></g><text x="27" y="27" font-size="13" fill="#0a1f7a" font-weight="bold" textLength="261" lengthAdjust="spacingAndGlyphs">SIMULATION_VERS006.vi Blockdiagramm *</text><text x="26" y="26" font-size="13" fill="#fff" font-weight="bold" textLength="261" lengthAdjust="spacingAndGlyphs">SIMULATION_VERS006.vi Blockdiagramm *</text>
<defs><linearGradient id="gcap" x1="0" y1="0" x2="1" y2="1"><stop offset="0" stop-color="#5a8af0"/><stop offset="0.5" stop-color="#2c5cd8"/><stop offset="1" stop-color="#2450c8"/></linearGradient><linearGradient id="gclose" x1="0" y1="0" x2="1" y2="1"><stop offset="0" stop-color="#f0a088"/><stop offset="0.4" stop-color="#dc5034"/><stop offset="1" stop-color="#c03c20"/></linearGradient></defs><rect x="951.5" y="10.500" width="20" height="20" rx="3" fill="url(#gcap)" stroke="#fff" stroke-width="1" shape-rendering="auto"/><rect x="956" y="23" width="8" height="3" fill="#fff"/><rect x="974.5" y="10.500" width="20" height="20" rx="3" fill="url(#gcap)" stroke="#fff" stroke-width="1" shape-rendering="auto"/><path d="M979.5 16.500H989.5V25.500H979.5Z" fill="none" stroke="#fff" stroke-width="1"/><rect x="979" y="15" width="11" height="3" fill="#fff"/><rect x="997.5" y="10.500" width="20" height="20" rx="3" fill="url(#gclose)" stroke="#fff" stroke-width="1" shape-rendering="auto"/><path d="M1003 16L1012 25M1012 16L1003 25" stroke="#fff" stroke-width="2.200" fill="none" shape-rendering="auto"/>
</g>
<g id="task">
<defs><linearGradient id="gtb" x1="0" y1="0" x2="0" y2="1"><stop offset="0" stop-color="#3a6fd8"/><stop offset="0.07" stop-color="#4a90ea"/><stop offset="0.2" stop-color="#2b66d6"/><stop offset="0.5" stop-color="#245edb"/><stop offset="0.88" stop-color="#2560dc"/><stop offset="1" stop-color="#1b45b0"/></linearGradient><linearGradient id="gtray" x1="0" y1="0" x2="0" y2="1"><stop offset="0" stop-color="#1a8ae6"/><stop offset="0.08" stop-color="#30a6f4"/><stop offset="0.25" stop-color="#1493ee"/><stop offset="0.85" stop-color="#1290ec"/><stop offset="1" stop-color="#0d6fc8"/></linearGradient><linearGradient id="gstart" x1="0" y1="0" x2="0" y2="1"><stop offset="0" stop-color="#3c8a3c"/><stop offset="0.1" stop-color="#6cba6c"/><stop offset="0.25" stop-color="#3c9e3c"/><stop offset="0.8" stop-color="#389838"/><stop offset="1" stop-color="#2a7a2a"/></linearGradient><linearGradient id="gbt" x1="0" y1="0" x2="0" y2="1"><stop offset="0" stop-color="#5a9cf8"/><stop offset="0.15" stop-color="#3e84f2"/><stop offset="0.85" stop-color="#3a80f0"/><stop offset="1" stop-color="#2e6ad8"/></linearGradient></defs>
<rect x="0" y="738" width="1024" height="30" fill="url(#gtb)"/>
<rect x="949" y="738" width="75" height="30" fill="url(#gtray)"/>
<path d="M948.500 739V768" stroke="#153a9a" stroke-width="1"/>
<path d="M0 738H88Q99 744 97 768H0Z" fill="url(#gstart)" shape-rendering="auto"/>
<g shape-rendering="auto" transform="translate(10.500,743.500) scale(1.1)"><path d="M2 2q4-2 7 0l-1.200 6q-3-2-7 0z" fill="#e8602c"/><path d="M10 2.500q4 1.500 7-0.500l-1.200 6q-3 2-7 .5z" fill="#6cc040"/><path d="M.6 9.500q4-2 7 0l-1.200 6q-3-2-7 0z" fill="#4a7ce0"/><path d="M8.600 10q4 1.500 7-.5l-1.200 6q-3 2-7 .5z" fill="#f4c020"/></g>
<text x="35" y="759" font-size="18" fill="#fff" font-weight="bold" textLength="38.5" lengthAdjust="spacingAndGlyphs" font-style="italic" style="text-shadow:1px 1px 1px #1c4a1c">Start</text>
<g transform="translate(111,745)" shape-rendering="auto"><path d="M3 1h9l3 3v8l-3 3h-9l-2-3v-8z" fill="#f4f8ff" stroke="#dce8fc" stroke-width="1"/><path d="M4.500 5h5v6.500h-5z" fill="none" stroke="#3a5cc0" stroke-width="1.300"/><path d="M7 9l5-4.500" stroke="#3a5cc0" stroke-width="1.600"/><path d="M12.500 4l2.500 1" stroke="#e05030" stroke-width="1.200"/></g>
<g transform="translate(134,745)" shape-rendering="auto"><path d="M12.800 10.500A5.200 5.200 0 1 1 13.200 7.500H4" fill="none" stroke="#3aa0f4" stroke-width="2.800"/><path d="M0.500 13q2-11 14.500-11.500" stroke="#5cb8ff" stroke-width="1.300" fill="none"/></g>
<g transform="translate(157,745)" shape-rendering="auto"><rect x="0" y="0" width="16" height="16" fill="#fff"/><rect x="1" y="1" width="8" height="14" fill="#d02c20"/><circle cx="5" cy="7" r="2.600" fill="#e8b040"/><circle cx="4.500" cy="7" r="1.200" fill="#409040"/></g><text x="168.5" y="751" font-size="5" fill="#1c7c6c" font-weight="bold">D</text><text x="168.2" y="756" font-size="5" fill="#1c7c6c" font-weight="bold">W</text><text x="168.5" y="761" font-size="5" fill="#1c7c6c" font-weight="bold">G</text>
<g transform="translate(180,745)" shape-rendering="auto"><rect x="1" y="1" width="13" height="14" fill="#f4ecd0" stroke="#a09878"/><path d="M3 5h8M3 8h8M3 11h6" stroke="#a0a0a0" stroke-width="1"/><path d="M14 1l-6 9" stroke="#e0a020" stroke-width="2"/></g>
<g transform="translate(204,745)" shape-rendering="auto"><circle cx="8" cy="8" r="7" fill="#fff" stroke="#101010" stroke-width="1.600"/><path d="M5 4h5l2 4-4 5-3-2z" fill="#202830"/><path d="M9 8l5 4" stroke="#3060d0" stroke-width="2"/></g>
<g transform="translate(226,745)" shape-rendering="auto"><circle cx="8" cy="7.500" r="6" fill="#3a78d0"/><path d="M4 4q3-2 6 0l-2 4-3 1z" fill="#50b050"/><path d="M1 12q7 5 14-3" stroke="#e0a030" stroke-width="2" fill="none"/></g>
<g transform="translate(249,745)" shape-rendering="auto"><rect x="0" y="0" width="16" height="16" fill="#1a2a9a"/><rect x="2" y="2" width="12" height="12" fill="#fff"/><path d="M3.500 4l2 8 2.500-6 2.500 6 2-8" stroke="#1a2a9a" stroke-width="1.800" fill="none"/></g>
<g transform="translate(272,745)" shape-rendering="auto"><rect x="0" y="0" width="16" height="16" fill="#d84a20"/><rect x="2" y="2" width="12" height="12" fill="#fff"/><circle cx="8" cy="8" r="3.800" fill="#d84a20"/><path d="M8 4v4h4" stroke="#fff" stroke-width="1.200" fill="none"/></g>
<g transform="translate(296,745)" shape-rendering="auto"><rect x="0" y="0" width="16" height="16" fill="#2a8a3a"/><rect x="2" y="2" width="12" height="12" fill="#e8f4e8"/><path d="M4 4l8 8M12 4l-8 8" stroke="#2a8a3a" stroke-width="2.200"/></g>
<g transform="translate(319,745)" shape-rendering="auto"><rect x="4" y="1" width="8" height="6" fill="#e8d820" stroke="#202020"/><path d="M2 9h12l1 3h-14z" fill="#f0f0f0" stroke="#202020"/><rect x="1" y="12" width="14" height="3" fill="#303030"/></g>
<g transform="translate(342,745)" shape-rendering="auto"><circle cx="8" cy="8" r="7" fill="#f0f4ff" stroke="#a0b0d8"/><circle cx="8" cy="8" r="4" fill="#2a60d0"/><path d="M6.500 5.500v5l4.500-2.500z" fill="#fff"/><path d="M2 4a7 7 0 0 1 5-3" stroke="#e07020" stroke-width="2" fill="none"/></g>
<rect x="382" y="741" width="131" height="25" rx="3" fill="url(#gbt)" shape-rendering="auto"/><text x="410" y="757.3" font-size="11" fill="#fff" textLength="87.7" lengthAdjust="spacingAndGlyphs">Posteingang - M...</text>
<g transform="translate(392,746)" shape-rendering="auto"><rect x="0.500" y="0.500" width="13" height="13" fill="#f6ee5c" stroke="#6c6c14" stroke-width="1"/><circle cx="7" cy="7" r="4.600" fill="#fffac0" stroke="#6c6c14" stroke-width="1.800"/><path d="M7 4.500v3h2.600" stroke="#6c6c14" stroke-width="1.400" fill="none"/></g>
<rect x="515" y="741" width="131" height="25" rx="3" fill="#1e52b7" shape-rendering="auto"/><path d="M517 741.500H644" stroke="#173f94" stroke-width="1"/><text x="555" y="757.3" font-size="11" fill="#fff" textLength="65.7" lengthAdjust="spacingAndGlyphs">LabVIEW 8....</text>
<g transform="translate(527,746) scale(0.88)" shape-rendering="auto"><rect x="1" y="2" width="14" height="12" fill="#303030"/><path d="M1 1.500h14M1 14.500h14" stroke="#d8c890" stroke-width="1" stroke-dasharray="1.500 1"/><polygon points="4,4 4,12 11.500,8" fill="#ffe61e" stroke="#a08000" stroke-width=".6"/><path d="M0 8h3" stroke="#e02020" stroke-width="1.400"/><path d="M5.500 8h3M7 6.500v3" stroke="#000" stroke-width="1"/><path d="M11 10h3v2h-3z" fill="#20a020"/></g>
<text x="544.5" y="757.3" font-size="11" fill="#f0e060" font-weight="bold">2</text>
<polygon points="638.500,752 645,752 641.700,755.500" fill="#fff" shape-rendering="auto"/>
<rect x="648" y="741" width="131" height="25" rx="3" fill="url(#gbt)" shape-rendering="auto"/><text x="676.4" y="757.3" font-size="11" fill="#fff" textLength="84" lengthAdjust="spacingAndGlyphs">R:\13677_TOPAZ</text>
<g transform="translate(657,745)" shape-rendering="auto"><path d="M1 3h5l1.500 2h7.500v9h-14z" fill="#f0c850" stroke="#a07820" stroke-width=".8"/><path d="M2.500 7h13l-1.500 7h-13z" fill="#fce890" stroke="#a07820" stroke-width=".8"/><circle cx="9" cy="5" r="3" fill="#d8e8f8" stroke="#8090b0" stroke-width=".6"/></g>
<rect x="781" y="741" width="132" height="25" rx="3" fill="url(#gbt)" shape-rendering="auto"/><text x="809.5" y="757.3" font-size="11" fill="#fff" textLength="89" lengthAdjust="spacingAndGlyphs">Signal im Zeitber...</text>
<g transform="translate(790,745)" shape-rendering="auto"><path d="M4 0h8l4 4v12h-12z" fill="#f8f4e0" stroke="#888" stroke-width=".8"/><circle cx="6" cy="8" r="4.500" fill="none" stroke="#2a70e0" stroke-width="2.200"/><path d="M1.500 8h9" stroke="#2a70e0" stroke-width="1.600"/></g>
<text x="923.3" y="757" font-size="11" fill="#fff" textLength="12.6" lengthAdjust="spacingAndGlyphs">DE</text>
<circle cx="950" cy="753.500" r="8.500" fill="#2a86ee" stroke="#8cc4fa" stroke-width="1" shape-rendering="auto"/>
<path d="M952 749.500L948 753.500L952 757.500" stroke="#fff" stroke-width="2.200" fill="none" shape-rendering="auto"/>
<g transform="translate(960,745)" shape-rendering="auto"><rect x="5" y="0" width="9" height="8" fill="#50284a" stroke="#8a7090" stroke-width="1"/><rect x="0" y="4" width="9" height="8" fill="#282848" stroke="#9090b0" stroke-width="1"/><path d="M2 14h5M9 10h5" stroke="#d8a0c8" stroke-width="2"/></g>
<text x="983.7" y="757" font-size="11" fill="#fff" textLength="26.5" lengthAdjust="spacingAndGlyphs">14:27</text>
</g>
</svg>
</body>
</html>
